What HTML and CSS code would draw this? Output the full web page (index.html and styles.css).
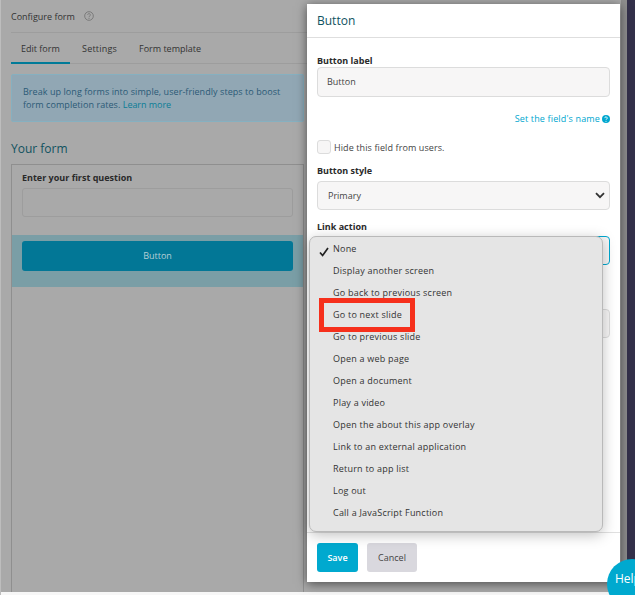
FILE: index.html
```html
<!DOCTYPE html>
<html lang="en">
<head>
<meta charset="utf-8">
<title>Configure form</title>
<link rel="stylesheet" href="styles.css">
</head>
<body>
<div class="app">
  <main class="page">
    <header class="page-head">
      <span>Configure form</span>
      <svg class="help-icon" width="10" height="10" viewBox="0 0 12 12"><circle cx="6" cy="6" r="5.2" fill="none" stroke="#777" stroke-width="1.1"/><path d="M4.4 4.7a1.6 1.6 0 1 1 2.4 1.4c-.6.4-.8.6-.8 1.2" fill="none" stroke="#777" stroke-width="1.1"/><circle cx="6" cy="8.8" r=".7" fill="#777"/></svg>
    </header>
    <nav class="tabs">
      <a class="tab active">Edit form</a>
      <a class="tab">Settings</a>
      <a class="tab">Form template</a>
    </nav>
    <div class="notice">Break up long forms into simple, user-friendly steps to boost form completion rates. <a class="notice-link">Learn more</a></div>
    <h2 class="your-form">Your form</h2>
    <section class="canvas">
      <div class="question">
        <label class="q-label">Enter your first question</label>
        <div class="q-input"></div>
      </div>
      <div class="button-row"><div class="big-button">Button</div></div>
    </section>
  </main>
  <div class="strip"></div>
  <div class="footer-line"></div>

  <aside class="modal">
    <div class="modal-title">Button</div>
    <div class="modal-body">
      <label class="field-label">Button label</label>
      <div class="input">Button</div>
      <div class="name-link">Set the field's name
        <svg width="8" height="8" viewBox="0 0 8 8"><circle cx="4" cy="4" r="4" fill="#00a7cf"/><path d="M2.8 3.1a1.2 1.2 0 1 1 1.8 1c-.4.3-.6.4-.6.8" fill="none" stroke="#fff" stroke-width=".9"/><circle cx="4" cy="6.2" r=".55" fill="#fff"/></svg>
      </div>
      <div class="check-row"><span class="checkbox"></span><span>Hide this field from users.</span></div>
      <label class="field-label style-label">Button style</label>
      <div class="input select">Primary
        <svg class="chev" width="10" height="7" viewBox="0 0 10 7"><path d="M1 1.2l4 4 4-4" fill="none" stroke="#333" stroke-width="1.8"/></svg>
      </div>
      <label class="field-label action-label">Link action</label>
      <div class="input action"></div>
      <div class="input hidden-field"></div>
    </div>
    <div class="modal-foot">
      <button class="btn save">Save</button>
      <button class="btn cancel">Cancel</button>
    </div>
  </aside>

  <ul class="menu">
    <li class="item"><svg class="tick" width="10" height="10" viewBox="0 0 10 10"><path d="M1 5.5l2.6 3L9 1" fill="none" stroke="#222" stroke-width="1.7"/></svg>None</li>
    <li class="item">Display another screen</li>
    <li class="item">Go back to previous screen</li>
    <li class="item">Go to next slide</li>
    <li class="item">Go to previous slide</li>
    <li class="item">Open a web page</li>
    <li class="item">Open a document</li>
    <li class="item">Play a video</li>
    <li class="item">Open the about this app overlay</li>
    <li class="item">Link to an external application</li>
    <li class="item">Return to app list</li>
    <li class="item">Log out</li>
    <li class="item">Call a JavaScript Function</li>
  </ul>
  <div class="highlight"></div>
  <div class="help-bubble">Help</div>
</div>
</body>
</html>
```
FILE: styles.css
```css
* { box-sizing: border-box; }
html, body { margin: 0; padding: 0; }
body { font-family: "Open Sans", "Liberation Sans", Arial, sans-serif; font-size: 9px; color: #333; }
.app { position: relative; width: 635px; height: 595px; overflow: hidden; background: #a9a9a9; border-left: 1px solid #bdbdbd; }

.page { width: 303px; margin-left: 10px; }
.page-head { height: 33px; display: flex; align-items: center; gap: 9px; border-bottom: 1px solid #9d9d9d; color: #333; }
.tabs { height: 31px; display: flex; border-bottom: 1px solid #9d9d9d; }
.tab { height: 31px; padding: 9px 0 0 11px; line-height: 14px; color: #333; width: 70px; letter-spacing: .2px; }
.tab.active { width: 59px; padding-left: 10px; border-bottom: 2px solid #027b98; margin-right: 1px; letter-spacing: 0; }
.tab:last-child { width: 100px; padding-left: 0; margin-left: -2px; letter-spacing: 0; }
.notice { margin-top: 10px; width: 293px; height: 48px; padding: 10px 11px 0; background: #91a7b4; border: 1px solid #86b0c0; border-radius: 2px; color: #2b5a76; line-height: 13px; letter-spacing: .06px; }
.notice-link { color: #0b7d96; letter-spacing: -.05px; }
.your-form { margin: 19px 0 0; font-size: 12px; font-weight: 400; line-height: 16px; color: #10525f; }
.canvas { margin-top: 7px; width: 293px; height: 440px; border: 1px solid #8f8f8f; border-bottom: 0; }
.question { height: 70px; padding: 6px 10px 0; }
.q-label { display: block; font-weight: 700; line-height: 14px; color: #2a2a2a; }
.q-input { margin-top: 3px; height: 29px; border: 1px solid #9d9d9d; border-radius: 3px; background: #a9a9a9; }
.button-row { height: 52px; padding: 6px 10px 0; background: #7a9ea6; }
.big-button { height: 30px; border-radius: 3px; background: #027796; color: #b5cfd6; text-align: center; line-height: 30px; }

.strip { position: absolute; left: 620px; top: 0; width: 15px; height: 592px; background: #8e8e8e; padding-left: 6px; }
.strip::after { content: ""; display: block; width: 8px; height: 592px; background: #33304a; }
.footer-line { position: absolute; left: -1px; top: 592px; width: 636px; height: 3px; background: #f7f7f7; }

.modal { position: absolute; left: 306px; top: 4px; width: 313px; height: 578px; background: #fff; display: flex; flex-direction: column; box-shadow: 0 2px 10px rgba(0,0,0,.55); }
.modal-title { height: 34px; padding: 9px 10px 0; border-bottom: 1px solid #dedede; font-size: 12px; line-height: 16px; color: #10525f; }
.modal-body { flex: 1; padding: 17px 10px 0; }
.field-label { display: block; font-weight: 700; line-height: 11px; color: #2a2a2a; }
.input { margin-top: 1px; height: 30px; padding-left: 9px; border: 1px solid #dcdcdc; border-radius: 4px; background: #f7f6f6; line-height: 28px; color: #444; }
.name-link { margin-top: 16px; height: 12px; line-height: 12px; display: flex; justify-content: flex-end; align-items: center; gap: 2px; color: #00a7cf; letter-spacing: .15px; }
.check-row { margin-top: 15px; height: 14px; display: flex; align-items: center; gap: 3px; color: #444; letter-spacing: .1px; }
.checkbox { width: 14px; height: 14px; border: 1px solid #dcdcdc; border-radius: 3px; background: #f7f6f6; }
.style-label { margin-top: 11px; }
.select { padding-left: 10px; position: relative; height: 29px; margin-top: 5px; }
.chev { position: absolute; right: 4px; top: 10px; }
.action-label { margin-top: 11px; }
.action { border-color: #00a7cf; margin-top: 4px; height: 29px; }
.hidden-field { margin-top: 44px; height: 29px; }
.modal-foot { height: 50px; padding: 10px 10px 0; border-top: 1px solid #e0e0e0; display: flex; gap: 9px; align-items: flex-start; }
.btn { height: 29px; border: 0; border-radius: 3px; font-family: inherit; font-size: 9px; padding: 0; }
.save { width: 41px; background: #00a9cf; color: #fff; font-weight: 600; }
.cancel { width: 50px; background: #d9d8de; color: #444; }

.menu { position: absolute; left: 308px; top: 236px; width: 294px; height: 296px; margin: 0; padding: 2px 0 0; list-style: none; background: #e5e5e5; border: 1px solid #b9b9b9; border-radius: 7px; box-shadow: 0 3px 14px rgba(0,0,0,.25); }
.item { position: relative; height: 22px; padding-left: 23px; line-height: 20px; color: #333; letter-spacing: .22px; }
.tick { position: absolute; left: 9px; top: 8px; }
.highlight { position: absolute; left: 318px; top: 298px; width: 96px; height: 34px; border: 5px solid #f6301c; }
.help-bubble { position: absolute; left: 606px; top: 559px; width: 50px; height: 50px; padding: 12px 0 0 8px; border-radius: 50%; background: #00a9cf; color: #fff; font-size: 12px; line-height: 16px; }
```
